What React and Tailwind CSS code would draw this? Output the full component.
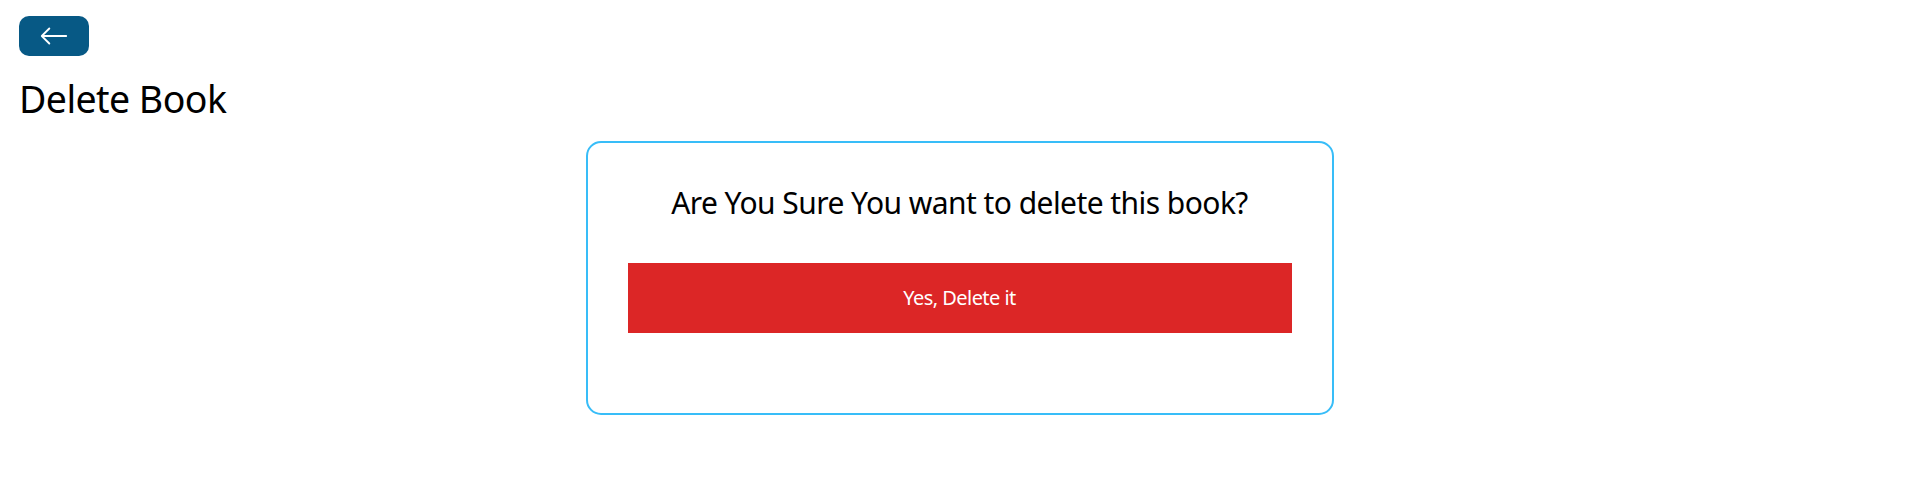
import { BsArrowLeft } from "react-icons/bs";

function BackButton() {
  return (
    <div className="flex">
      <button
        type="button"
        className="w-fit rounded-[10px] bg-[#075985] px-[20px] py-[5px] text-white"
        aria-label="Back"
      >
        <BsArrowLeft className="h-[30px] w-[30px]" />
      </button>
    </div>
  );
}

export default function App() {
  return (
    <div
      className="min-h-[493px] bg-white px-[19px] pt-[16px] pb-[20px] tracking-[-0.035em] text-black"
      style={{ fontFamily: '"Segoe UI", "Noto Sans", sans-serif' }}
    >
      <BackButton />
      <h1 className="my-[20px] text-[37.5px] leading-[45px] font-normal">Delete Book</h1>
      <div className="mx-auto flex w-[748px] flex-col items-center rounded-[15px] border-2 border-[#38bdf8] p-[40px]">
        <h3 className="text-[30px] leading-[40px] font-normal">
          Are You Sure You want to delete this book?
        </h3>
        <button
          type="button"
          className="my-[40px] w-full bg-[#dc2626] p-[20px] text-[20px] leading-[30px] text-white"
        >
          Yes, Delete it
        </button>
      </div>
    </div>
  );
}
